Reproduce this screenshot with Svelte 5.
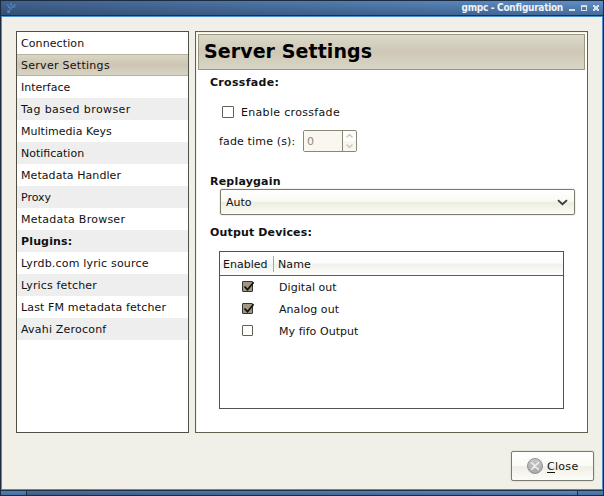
<script>
  // Each entry carries the tracking, in pixels, of its label.
  const pages = [
    ['Connection', 0.1], ['Server Settings', 0.28], ['Interface', 0], ['Tag based browser', 0.4],
    ['Multimedia Keys', 0.03], ['Notification', 0], ['Metadata Handler', 0.07], ['Proxy', 0],
    ['Metadata Browser', 0.25], ['Plugins:', 0.15], ['Lyrdb.com lyric source', 0.18],
    ['Lyrics fetcher', 0.15], ['Last FM metadata fetcher', 0.14], ['Avahi Zeroconf', 0.2]
  ];
  let selected = $state('Server Settings');
  let crossfade = $state(false);
  let outputs = $state([
    { name: 'Digital out', on: true },
    { name: 'Analog out', on: true },
    { name: 'My fifo Output', on: false }
  ]);
</script>

<div class="window">
  <header class="titlebar">
    <svg class="logo" width="12" height="13" viewBox="0 0 12 13">
      <path d="M1 2h3v2H1z M4 5h3v3H4z" fill="#446fae" />
      <path d="M2 8h3v3H2z M6 3h4v3H6z M9 2h2v2H9z" fill="#4c73ab" />
      <path d="M3 4h2v2H3z M5 1h2v2H5z M3 9h2v2H3z" fill="#6386b6" opacity=".7" />
    </svg>
    <span class="title">gmpc - Configuration</span>
    <svg class="controls" width="30" height="8" viewBox="0 0 30 8" shape-rendering="crispEdges">
      <path d="M0 5h6v2H0z" fill="#d9dee4" />
      <path d="M12 1h6v6h-6z M13 3v3h4V3z" fill="#d9dee4" fill-rule="evenodd" />
      <path d="M24 1h2v1h2V1h2v2h-1v2h1v2h-2V6h-2v1h-2V5h1V3h-1z" fill="#d9dee4" />
    </svg>
  </header>

  <div class="client">
    <main>
      <nav>
        {#each pages as [page, tracking]}
          <button class="row" class:selected={page === selected} class:bold={page === 'Plugins:'} style:letter-spacing="{tracking}px" onclick={() => (selected = page)}>{page}</button>
        {/each}
      </nav>

      <section class="panel">
        <h1>Server Settings</h1>

        <h2 class="first">Crossfade:</h2>
        <button class="check-row" onclick={() => (crossfade = !crossfade)}>
          <span class="box big">{#if crossfade}{@render tick()}{/if}</span>
          <span class="cf-label">Enable crossfade</span>
        </button>
        <div class="fade-row">
          <span class="fade-label">fade time (s):</span>
          <span class="spin">
            <span class="value">0</span>
            <svg width="13" height="20" viewBox="0 0 13 20">
              <rect y="10" width="13" height="10" fill="#f7f6f1" />
              <path d="M3.5 6.5l3-3 3 3M3.5 13.5l3 3 3-3" fill="none" stroke="#cfc8b5" stroke-width="1.5" />
            </svg>
          </span>
        </div>

        <h2 class="second">Replaygain</h2>
        <div class="combo">
          <span>Auto</span>
          <svg width="11" height="7" viewBox="0 0 11 7"><path d="M1 1.2l4.5 4 4.5-4" fill="none" stroke="#3a3a38" stroke-width="1.8" /></svg>
        </div>

        <h2 class="third">Output Devices:</h2>
        <div class="table">
          <div class="thead"><span class="th1">Enabled</span><span class="th2">Name</span></div>
          {#each outputs as output}
            <button class="tr" onclick={() => (output.on = !output.on)}>
              <span class="box" class:on={output.on}>{#if output.on}{@render tick()}{/if}</span>
              <span class="name">{output.name}</span>
            </button>
          {/each}
        </div>
      </section>
    </main>

    <footer>
      <button class="close">
        <svg width="16" height="16" viewBox="0 0 16 16">
          <defs><linearGradient id="disc" x2="0" y2="1"><stop stop-color="#c9c9c9" /><stop offset="1" stop-color="#a9a9a9" /></linearGradient></defs>
          <circle cx="8" cy="8" r="7.5" fill="url(#disc)" stroke="#8f8f8f" />
          <path d="M4.7 4.7l6.6 6.6M11.3 4.7l-6.6 6.6" stroke="#f2f2f2" stroke-width="1.5" stroke-linecap="round" />
        </svg>
        <span class="close-text"><span class="mnemonic">C</span>lose</span>
      </button>
    </footer>
  </div>

  <div class="grips"><i></i><i class="mid"></i><i></i></div>
</div>

{#snippet tick()}
  <svg class="tick" width="13" height="12" viewBox="0 0 13 12"><path d="M2.5 5.5l3 3.2L11.6 1.2" fill="none" stroke="#111" stroke-width="1.8" /></svg>
{/snippet}

<style>
  :global(body) { margin: 0; }
  .window {
    box-sizing: border-box; width: 604px; height: 496px; border: 1px solid #1c2c40;
    background: #1f3044; display: flex; flex-direction: column;
    font: 11px/22px "DejaVu Sans", sans-serif; color: #111; overflow: hidden;
  }
  button { box-sizing: border-box; font: inherit; color: inherit; background: none; border: 0; padding: 0; margin: 0; text-align: left; }
  svg { flex: none; }
  .titlebar {
    height: 14px; display: flex; align-items: center; padding: 0 4px 0 4px;
    background: linear-gradient(to right, rgba(28, 44, 66, .45), rgba(28, 44, 66, 0) 100%), linear-gradient(#6090c8, #446b9c);
  }
  .title {
    margin-left: auto; font: bold 10px/14px "DejaVu Sans Condensed", "DejaVu Sans", sans-serif; font-stretch: condensed;
    letter-spacing: -.28px; color: #eef2f6; white-space: pre;
  }
  .controls { margin-left: 6px; }
  .client {
    margin-top: 1px; height: 472px; border: 1px solid #4f8ccc; background: #f0efe8;
    display: flex; flex-direction: column;
  }
  main { display: flex; gap: 6px; padding: 14px 14px 0; height: 402px; }
  nav { box-sizing: border-box; width: 173px; border: 1px solid #504f43; background: #fff; display: flex; flex-direction: column; }
  .row { height: 22px; padding: 1px 0 0 4px; line-height: 21px; white-space: pre; }
  .row:nth-child(even) { background: #eee; }
  .row.selected {
    background: linear-gradient(#dad7c8, #cdc5b3 50%, #d9d6c6); box-shadow: inset 0 1px #b9b29c, inset 0 -1px #b9b29c;
  }
  .bold { font-weight: bold; }
  .panel {
    box-sizing: border-box; width: 393px; border: 1px solid #615f4e; background: #fff;
    box-shadow: inset 1px 1px #f4f3ea; padding: 2px 2px 0; display: flex; flex-direction: column;
  }
  h1 {
    box-sizing: border-box; margin: 0; height: 36px; border: 1px solid #9c967c; padding-left: 5px;
    font-size: 19px; line-height: 32px; letter-spacing: .08px; color: #000; white-space: pre;
    background: linear-gradient(#dad9ca, #cfc7b6 50%, #d8d6c7);
  }
  h2 { margin: 0; padding-left: 12px; font-size: 11px; line-height: 16px; letter-spacing: .2px; }
  .first { margin-top: 5px; letter-spacing: .3px; }
  .check-row { display: flex; align-items: center; margin: 10px 0 0 24px; height: 22px; }
  .box {
    box-sizing: border-box; width: 11px; height: 11px; border: 1px solid #615f50; border-radius: 1px;
    background: #fff; position: relative; flex: none; margin-bottom: 1px;
  }
  .box.big { width: 12px; height: 12px; margin-bottom: 0; }
  .box.on { background: #a09883; border-color: #333; }
  .tick { position: absolute; left: -1px; top: -1px; }
  .cf-label { margin-left: 7px; letter-spacing: .32px; padding-top: 1px; }
  .fade-row { display: flex; align-items: center; margin: 7px 0 0 21px; height: 22px; }
  .fade-label { width: 84px; letter-spacing: .15px; padding-top: 1px; }
  .spin {
    box-sizing: border-box; width: 54px; height: 22px; border: 1px solid #8a8775; border-radius: 2px;
    display: flex; color: #8b8a80; background: #fff;
  }
  .value { width: 39px; box-sizing: border-box; padding-left: 3px; line-height: 21px; background: #faf7f0; border-right: 1px solid #8a8775; }
  .second { margin-top: 22px; line-height: 15px; padding-top: 0; }
  .combo {
    box-sizing: border-box; width: 355px; height: 26px; margin-left: 22px; border: 1px solid #7c7b6e;
    border-radius: 2px; display: flex; align-items: center; justify-content: space-between; padding: 0 6px 0 5px;
    background: linear-gradient(#fff, #f8f8f3 50%, #edece0 52%, #fcfcf8); box-shadow: 0 0 1px 1px #f0f0ec;
  }
  .combo span { padding-top: 2px; }
  .third { margin-top: 10px; letter-spacing: .15px; }
  .table { box-sizing: border-box; width: 345px; height: 158px; margin: 10px 0 0 21px; border: 1px solid #53524a; display: flex; flex-direction: column; }
  .thead {
    height: 23px; border-bottom: 1px solid #615f50; display: flex; align-items: center; padding-left: 3px;
    background: linear-gradient(#fff, #fcfcfa 48%, #f1f1ec 52%, #fdfdfc);
  }
  .th1 { width: 50px; line-height: 16px; padding-top: 2px; }
  .th2 { border-left: 1px solid #aaa99f; line-height: 15px; padding: 1px 0 0 4px; letter-spacing: .1px; }
  .tr { height: 22px; display: flex; align-items: center; padding-left: 22px; }
  .name { margin-left: 26px; padding-top: 1px; letter-spacing: .05px; }
  footer { display: flex; justify-content: flex-end; padding: 18px 8px 0 0; }
  .close {
    width: 83px; height: 30px; border: 1px solid #7c7b6e; border-radius: 2px;
    background: linear-gradient(#fff, #fafaf6 50%, #f0efe5 52%, #fcfcf9); box-shadow: 0 0 1px 1px #e4e3da;
    display: flex; align-items: center; padding-left: 15px;
  }
  .close-text { margin-left: 4px; line-height: 16px; letter-spacing: .3px; padding-top: 1px; }
  .mnemonic { text-decoration: underline; text-underline-offset: 2px; }
  .grips { margin-top: 1px; height: 4px; display: flex; gap: 1px; }
  .grips i { width: 25px; background: linear-gradient(#4d7fb9, #466f9f); }
  .grips .mid { flex: 1; background: linear-gradient(to right, rgba(28, 44, 66, .3), rgba(28, 44, 66, 0)), linear-gradient(#5a8cc6, #466f9f); }
</style>
